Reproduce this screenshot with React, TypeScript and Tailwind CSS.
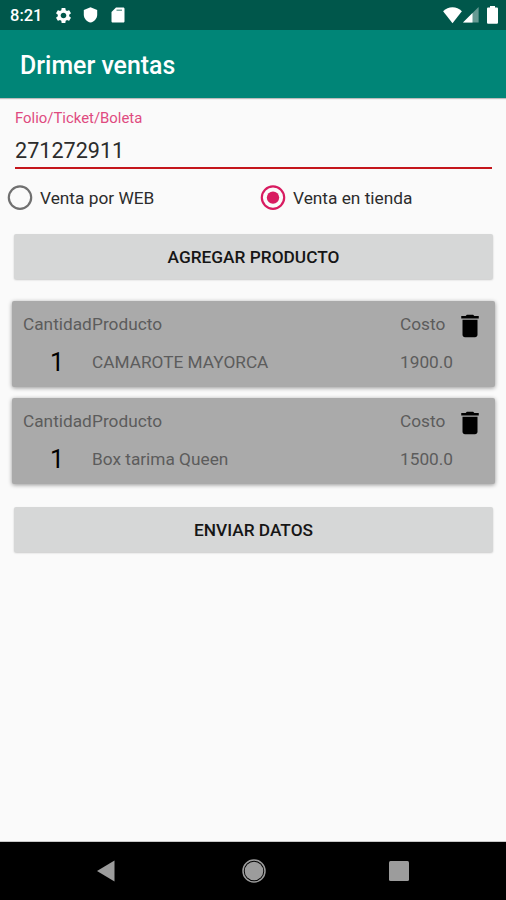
import React, { useState } from 'react';
import { MdDelete, MdSettings } from 'react-icons/md';

interface Product {
  id: number;
  quantity: number;
  name: string;
  cost: string;
}

const initialProducts: Product[] = [
  { id: 1, quantity: 1, name: 'CAMAROTE MAYORCA', cost: '1900.0' },
  { id: 2, quantity: 1, name: 'Box tarima Queen', cost: '1500.0' },
];

const StatusBar: React.FC = () => (
  <div className="flex h-[30px] items-center bg-[#00574b] pl-[10px] pr-2 text-white">
    <span className="w-[44px] pt-px text-[16.5px] leading-[29px] font-medium">8:21</span>
    <MdSettings className="size-[19px]" />
    <svg className="ml-[9px] h-4 w-[17px]" viewBox="0 0 16 16" fill="currentColor">
      <path d="M8 .3 1.3 2.9v4.8c0 3.7 2.9 6.8 6.7 7.9 3.8-1.1 6.7-4.2 6.7-7.9V2.9z" />
    </svg>
    <svg className="ml-[12px] h-4 w-[14px]" viewBox="0 0 14 16" fill="currentColor">
      <path d="M5 .5h7.2c.8 0 1.3.6 1.3 1.3v12.4c0 .7-.5 1.3-1.3 1.3H1.8c-.8 0-1.3-.6-1.3-1.3V5z" />
      <path d="M5.5 2.5H11V4H5.5z" fill="#00574b" opacity=".55" />
    </svg>
    <svg className="ml-auto h-[17px] w-[19px]" viewBox="0 0 19 17" fill="currentColor">
      <path d="M9.5 16.3.1 4.3C2.8 1.7 6 .3 9.5.3s6.7 1.4 9.4 4z" />
    </svg>
    <svg className="ml-px size-[16px]" viewBox="0 0 16 16" fill="currentColor">
      <path d="M0 15.6 15.6 0v15.6z" opacity=".4" />
      <path d="M0 15.6 9.5 6.1v9.5z" />
    </svg>
    <svg className="ml-[8px] h-[18px] w-[11px]" viewBox="0 0 11 18" fill="currentColor">
      <path d="M3 0h5v1.5h1.7c.7 0 1.3.5 1.3 1.2v13.8c0 .7-.6 1.3-1.3 1.3H1.3C.6 17.8 0 17.2 0 16.5V2.7c0-.7.6-1.2 1.3-1.2H3z" />
    </svg>
  </div>
);

interface RadioProps {
  label: string;
  checked: boolean;
  onSelect: () => void;
}

const Radio: React.FC<RadioProps> = ({ label, checked, onSelect }) => (
  <button
    role="radio"
    aria-checked={checked}
    onClick={onSelect}
    className="flex h-[26px] items-center gap-[7px] text-left text-[17.3px] text-[#2c2c2c]"
  >
    <svg className={checked ? 'size-[26px] text-[#d81b60]' : 'size-[26px] text-[#707070]'} viewBox="0 0 26 26">
      <circle cx="13" cy="12.6" r="11.2" fill="none" stroke="currentColor" strokeWidth="2.2" />
      {checked && <circle cx="13" cy="12.6" r="6.2" fill="currentColor" />}
    </svg>
    <span className="leading-6">{label}</span>
  </button>
);

const ActionButton: React.FC<{ children: React.ReactNode }> = ({ children }) => (
  <button className="mr-[13px] ml-[14px] h-[45px] rounded-[2px] bg-[#d6d7d7] pt-[2px] text-[17.3px] font-medium text-[#161616] shadow-[0_1px_2px_rgba(0,0,0,0.2)]">
    {children}
  </button>
);

const ProductCard: React.FC<{ product: Product; onDelete: () => void }> = ({ product, onDelete }) => (
  <div className="grid h-[86px] grid-cols-[69px_308px_60px_1fr] grid-rows-[38px_38px] rounded-[2px] bg-[#aaaaaa] pt-[4px] pl-[11px] text-[17.25px] leading-[38px] text-[#5c5c5c] shadow-[0_1px_4px_rgba(0,0,0,0.4)]">
    <span>Cantidad</span>
    <span>Producto</span>
    <span>Costo</span>
    <button aria-label="Eliminar" onClick={onDelete} className="flex items-center pt-[3px] text-black">
      <MdDelete className="-ml-[5px] size-[30px]" />
    </button>
    <span className="pt-px pr-px text-center text-[25px] text-black">{product.quantity}</span>
    <span>{product.name}</span>
    <span>{product.cost}</span>
  </div>
);

const NavigationBar: React.FC = () => (
  <nav className="flex h-[58px] items-center justify-between bg-black pr-[97px] pl-[96px] text-[#9c9c9c] shadow-[0_-1px_0_rgba(0,0,0,0.2)]">
    <svg className="h-[22px] w-[20px]" viewBox="0 0 20 22" fill="currentColor">
      <path d="M1 11 18.5.5v21z" />
    </svg>
    <svg className="ml-[2px] size-[24px]" viewBox="0 0 24 24" fill="currentColor">
      <circle cx="12" cy="12" r="9.3" />
      <circle cx="12" cy="12" r="11" fill="none" stroke="currentColor" strokeWidth="1.5" />
    </svg>
    <svg className="size-[20px]" viewBox="0 0 20 20" fill="currentColor">
      <rect width="20" height="20" rx="1.5" />
    </svg>
  </nav>
);

const App: React.FC = () => {
  const [folio, setFolio] = useState('271272911');
  const [channel, setChannel] = useState<'web' | 'store'>('store');
  const [products, setProducts] = useState(initialProducts);

  const removeProduct = (id: number) => {
    setProducts(products.filter((product) => product.id !== id));
  };

  return (
    <div className="flex h-[900px] w-[506px] flex-col overflow-hidden bg-[#fafafa] font-['Roboto',sans-serif]">
      <StatusBar />
      <header className="flex h-[68px] items-center bg-[#008577] pt-[4px] pl-5 shadow-[0_1px_1px_rgba(0,0,0,0.25)]">
        <h1 className="text-[24.9px] font-medium text-white">Drimer ventas</h1>
      </header>

      <main className="flex flex-1 flex-col">
        <label className="mr-[14px] ml-[15px] flex h-[71px] flex-col border-b-2 border-[#c4161c] pt-[10px]">
          <span className="text-[14.9px] leading-[20px] text-[#df4a80]">Folio/Ticket/Boleta</span>
          <input
            value={folio}
            onChange={(e) => setFolio(e.target.value)}
            className="mt-[8px] h-[30px] w-full text-[21.6px] text-[#2c2c2c] outline-none"
          />
        </label>

        <div role="radiogroup" className="mt-[16px] grid grid-cols-[253px_1fr] pl-[7px]">
          <Radio label="Venta por WEB" checked={channel === 'web'} onSelect={() => setChannel('web')} />
          <Radio label="Venta en tienda" checked={channel === 'store'} onSelect={() => setChannel('store')} />
        </div>

        <div className="mt-[23px] flex flex-col">
          <ActionButton>AGREGAR PRODUCTO</ActionButton>
        </div>

        <div className="mt-[22px] mr-[11px] ml-[12px] flex flex-col gap-[11px]">
          {products.map((product) => (
            <ProductCard key={product.id} product={product} onDelete={() => removeProduct(product.id)} />
          ))}
        </div>

        <div className="mt-[23px] flex flex-col">
          <ActionButton>ENVIAR DATOS</ActionButton>
        </div>
      </main>

      <NavigationBar />
    </div>
  );
};

export default App;
